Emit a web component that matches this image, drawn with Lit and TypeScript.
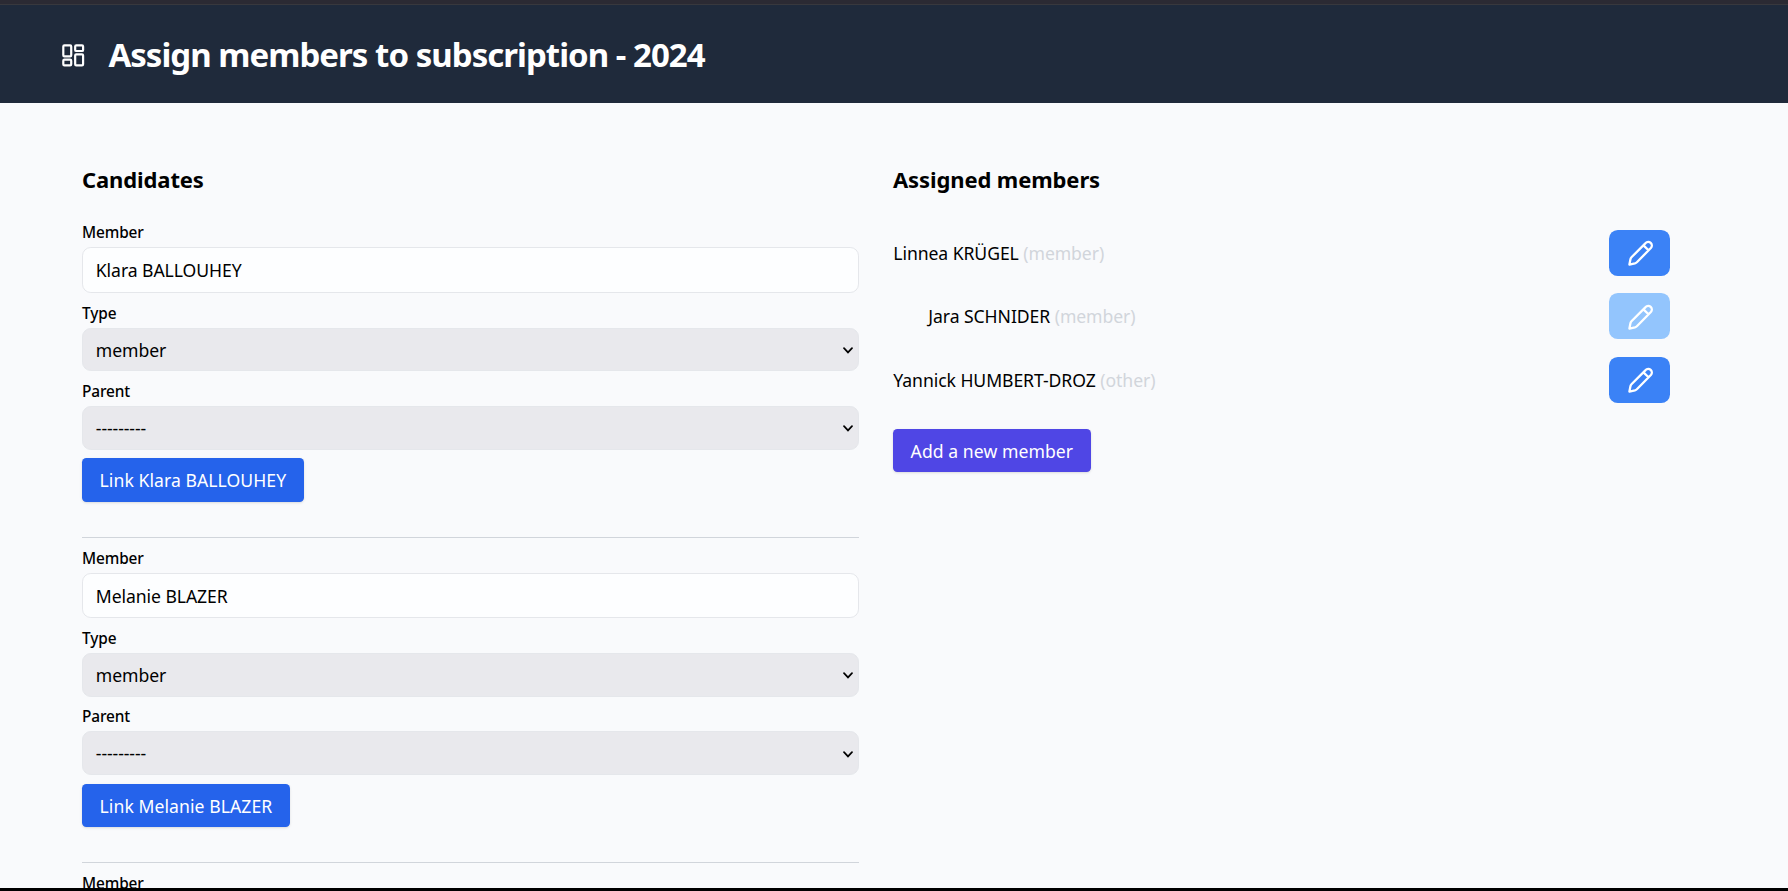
import { LitElement, html, css, svg } from "lit";
import { customElement } from "lit/decorators.js";

interface Assigned {
  name: string;
  type: string;
  child?: boolean;
}

const CANDIDATES = ["Klara BALLOUHEY", "Melanie BLAZER"];
const ASSIGNED: Assigned[] = [
  { name: "Linnea KRÜGEL", type: "member" },
  { name: "Jara SCHNIDER", type: "member", child: true },
  { name: "Yannick HUMBERT-DROZ", type: "other" },
];

const pencil = svg`<path d="M2.2 22.3 L3.1 17.6 Q3.4 16.4 4.3 15.5 L16.9 2.8 A3.25 3.25 0 0 1 21.7 7.3 L9.2 20 Q8.3 20.9 7.2 21.2 Z M15 4.9 L19.3 9.1" />`;

@customElement("app-root")
export class AppRoot extends LitElement {
  static styles = css`
    :host {
      display: flex;
      flex-direction: column;
      box-sizing: border-box;
      height: 891px;
      overflow: hidden;
      background: #f9fafc;
      border-bottom: 3px solid #000;
      color: #000;
      font: 17.6px/26.4px "Noto Sans", sans-serif;
      letter-spacing: -0.07px;
    }
    * {
      box-sizing: border-box;
    }
    .strip {
      flex: none;
      height: 5px;
      background: #2b2a33;
      border-bottom: 1px solid #38383d;
    }
    header {
      flex: none;
      height: 98px;
      display: flex;
      align-items: center;
      gap: 22px;
      padding: 2px 60px 0;
      background: #1f2a3b;
      color: #fff;
    }
    .grid-icon {
      width: 26.4px;
      height: 26.4px;
      fill: none;
      stroke: currentColor;
      stroke-width: 2;
    }
    h1 {
      margin: 0;
      font-size: 33px;
      line-height: 39.6px;
      font-weight: 700;
      letter-spacing: -0.97px;
    }
    main {
      flex: 1;
      min-height: 0;
      display: grid;
      grid-template-columns: 777px 777px;
      column-gap: 34px;
      padding: 60.6px 82px 0;
      align-items: start;
    }
    h2 {
      margin: 0 0 26.8px;
      font-size: 22px;
      line-height: 30.8px;
      font-weight: 700;
      letter-spacing: -0.11px;
    }
    .candidate {
      height: 325.4px;
      display: flex;
      flex-direction: column;
      align-items: flex-start;
    }
    label {
      display: block;
      font-size: 15.4px;
      line-height: 23px;
      font-weight: 500;
      margin-bottom: 3px;
      letter-spacing: -0.12px;
    }
    .control {
      width: 100%;
      display: flex;
      align-items: center;
      justify-content: space-between;
      padding: 0.8px 5px 0 12.8px;
      border: 1px solid #e5e7eb;
      border-radius: 8.8px;
    }
    .input {
      height: 45.8px;
      margin-bottom: 8.9px;
      background: #fdfeff;
    }
    .select {
      height: 43.5px;
      margin-bottom: 8.7px;
      background: #e9e9ed;
    }
    .chevron {
      width: 10px;
      height: 7px;
      margin-top: 1px;
      fill: none;
      stroke: #000;
      stroke-width: 1.7;
      stroke-linecap: round;
    }
    .btn {
      height: 43.8px;
      display: inline-flex;
      align-items: center;
      padding: 1px 17.6px 0;
      border: 0;
      border-radius: 4.4px;
      color: #fff;
      font: inherit;
      letter-spacing: 0.06px;
      box-shadow: 0 1px 3px rgba(0, 0, 0, 0.1), 0 1px 2px -1px rgba(0, 0, 0, 0.1);
    }
    .link {
      background: #2563eb;
    }
    .add {
      background: #4f46e5;
      height: 43.2px;
      padding-top: 1.6px;
      margin-top: 8.6px;
    }
    .rule {
      width: 100%;
      border-top: 1px solid #d1d5db;
      margin-top: auto;
      margin-bottom: 8.8px;
    }
    .assigned {
      padding-top: 8.8px;
    }
    .row {
      display: flex;
      align-items: center;
      justify-content: space-between;
      height: 46px;
      margin-bottom: 17.4px;
    }
    .name {
      padding-left: 0.3px;
    }
    .child {
      padding-left: 35px;
    }
    .type {
      color: #d1d5db;
    }
    .edit {
      width: 61px;
      height: 46px;
      border: 0;
      border-radius: 8.8px;
      padding: 1px 0 0 1px;
      display: grid;
      place-items: center;
      background: #3b82f6;
      color: #fff;
    }
    .edit.off {
      background: #93c5fd;
    }
    .pencil {
      width: 26.4px;
      height: 26.4px;
      fill: none;
      stroke: currentColor;
      stroke-width: 2.1;
      stroke-linejoin: round;
    }
  `;

  private field(label: string, value: string, select: boolean) {
    return html`<label>${label}</label>
      <div class="control ${select ? "select" : "input"}">
        <span>${value}</span>
        ${select
          ? html`<svg class="chevron" viewBox="0 0 10 7"><path d="M1 1.2 L5 5.4 L9 1.2" /></svg>`
          : ""}
      </div>`;
  }

  render() {
    return html`
      <div class="strip"></div>
      <header>
        <svg class="grid-icon" viewBox="0 0 24 24">
          <rect x="3" y="3" width="7.2" height="10" rx="1" />
          <rect x="13.8" y="3" width="7.2" height="5.2" rx="1" />
          <rect x="13.8" y="11.2" width="7.2" height="10" rx="1" />
          <rect x="3" y="16" width="7.2" height="5.2" rx="1" />
        </svg>
        <h1>Assign members to subscription - 2024</h1>
      </header>
      <main>
        <section>
          <h2>Candidates</h2>
          ${CANDIDATES.map(
            (name) => html`<div class="candidate">
              ${this.field("Member", name, false)} ${this.field("Type", "member", true)}
              ${this.field("Parent", "---------", true)}
              <button class="btn link">Link ${name}</button>
              <div class="rule"></div>
            </div>`
          )}
          <label>Member</label>
        </section>
        <section>
          <h2>Assigned members</h2>
          <div class="assigned">
            ${ASSIGNED.map(
              (m) => html`<div class="row ${m.child ? "child" : ""}">
                <div class="name">${m.name} <span class="type">(${m.type})</span></div>
                <button class="edit ${m.child ? "off" : ""}" aria-label="Edit">
                  <svg class="pencil" viewBox="0 0 24 24">${pencil}</svg>
                </button>
              </div>`
            )}
            <button class="btn add">Add a new member</button>
          </div>
        </section>
      </main>
    `;
  }
}
